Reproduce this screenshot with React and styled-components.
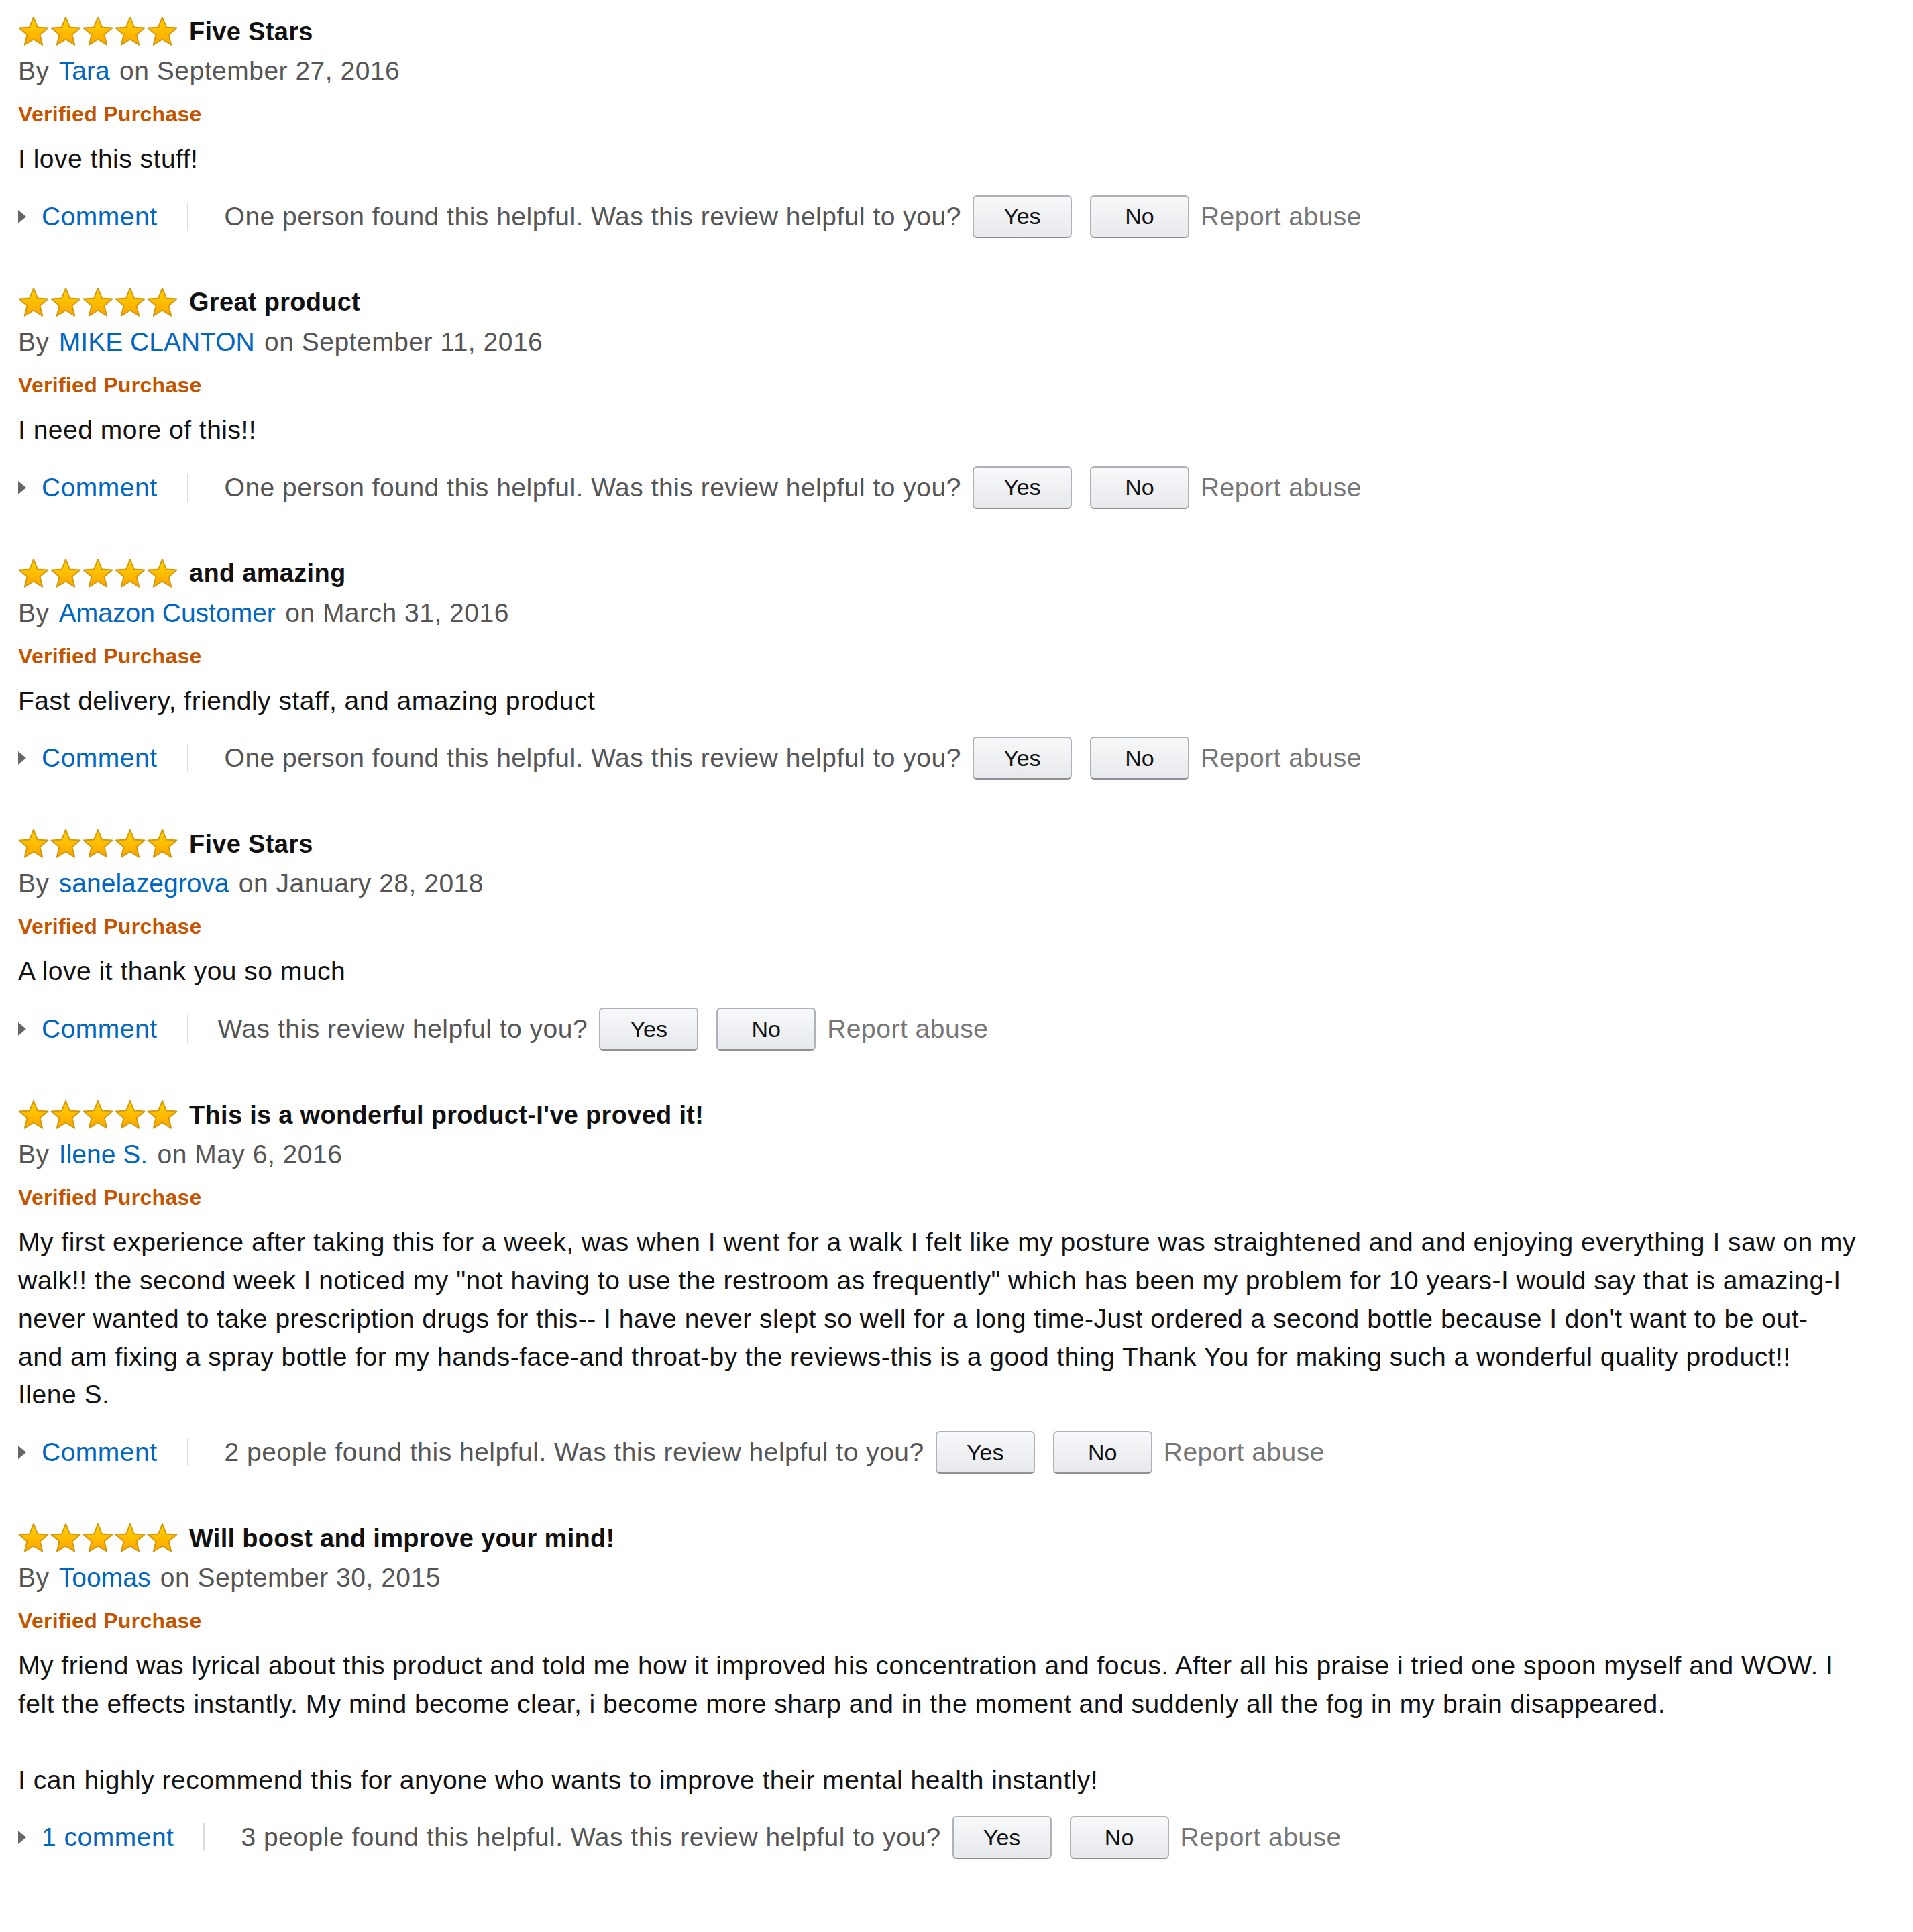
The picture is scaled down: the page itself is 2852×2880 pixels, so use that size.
import React from "react";
import styled, { createGlobalStyle, css } from "styled-components";

const GlobalStyle = createGlobalStyle`
  body {
    margin: 0;
    background: #ffffff;
    font-family: "Liberation Sans", Arial, sans-serif;
    color: #111111;
  }
`;

// Amazon Ember runs a bit wider than Arial, so open the spacing up a little
const baseText = css`
  font-size: 39px;
  letter-spacing: 0.5px;
`;

const ReviewList = styled.div`
  box-sizing: border-box;
  width: 2852px;
  min-height: 2880px;
  padding: 22px 0 0 27px;
`;

const ReviewBlock = styled.div`
  margin-bottom: 71px;
`;

const TitleRow = styled.div`
  display: flex;
  align-items: center;
  gap: 15px;
  height: 50px;
`;

const ReviewTitle = styled.span`
  font-size: 38px;
  font-weight: bold;
  letter-spacing: 0.3px;
  color: #111111;
`;

const ByLine = styled.div`
  ${baseText}
  line-height: 68px;
  color: #555555;
`;

const Author = styled.a`
  color: #0066c0;
  text-decoration: none;
  letter-spacing: 0;
  margin: 0 3px;
`;

const VerifiedBadge = styled.div`
  font-size: 32px;
  font-weight: bold;
  letter-spacing: 0.3px;
  line-height: 60px;
  color: #c45500;
`;

const ReviewText = styled.div`
  ${baseText}
  margin-top: 9px;
  line-height: 56.8px;
  color: #111111;
  white-space: pre-line;
`;

const ActionRow = styled.div`
  ${baseText}
  display: flex;
  align-items: center;
  height: 64px;
  margin-top: 25px;
`;

const Caret = styled.span`
  width: 0;
  height: 0;
  border-left: 12px solid #666666;
  border-top: 10px solid transparent;
  border-bottom: 10px solid transparent;
  margin-right: 23px;
`;

const CommentLink = styled.a`
  color: #0066c0;
  text-decoration: none;
`;

const Divider = styled.span`
  width: 2px;
  height: 42px;
  background: #dddddd;
  margin: 0 44px;
`;

const HelpfulText = styled.span`
  color: #555555;
`;

const Count = styled.span`
  padding-left: 10px;
`;

const VoteButton = styled.button`
  box-sizing: border-box;
  width: 148px;
  height: 64px;
  margin-left: ${(p) => (p.$second ? "27px" : "17px")};
  border: 2px solid #adb1b8;
  border-bottom-color: #8d9096;
  border-radius: 6px;
  background: linear-gradient(to bottom, #f7f8fa, #e7e9ec);
  font-family: inherit;
  font-size: 34px;
  color: #111111;
  cursor: pointer;
`;

const ReportLink = styled.a`
  margin-left: 17px;
  color: #767676;
  text-decoration: none;
`;

const STAR =
  "22,1 27.9,15.4 43.4,16.6 31.5,26.6 35.2,41.7 22,33.5 8.8,41.7 12.5,26.6 0.6,16.6 16.1,15.4";

const Stars = () => (
  <svg width="240" height="44" viewBox="0 0 240 44">
    <defs>
      <linearGradient id="starFill" x1="0" y1="0" x2="0" y2="1">
        <stop offset="0" stopColor="#ffd400" />
        <stop offset="1" stopColor="#ffa500" />
      </linearGradient>
    </defs>
    {[0, 1, 2, 3, 4].map((i) => (
      <polygon
        key={i}
        points={STAR}
        transform={`translate(${i * 48 + 1} 0)`}
        fill="url(#starFill)"
        stroke="#d39a0c"
        strokeWidth="2"
        strokeLinejoin="round"
      />
    ))}
  </svg>
);

const reviews = [
  {
    title: "Five Stars",
    author: "Tara",
    date: "September 27, 2016",
    text: "I love this stuff!",
    comment: "Comment",
    helpful: "One person found this helpful.",
  },
  {
    title: "Great product",
    author: "MIKE CLANTON",
    date: "September 11, 2016",
    text: "I need more of this!!",
    comment: "Comment",
    helpful: "One person found this helpful.",
  },
  {
    title: "and amazing",
    author: "Amazon Customer",
    date: "March 31, 2016",
    text: "Fast delivery, friendly staff, and amazing product",
    comment: "Comment",
    helpful: "One person found this helpful.",
  },
  {
    title: "Five Stars",
    author: "sanelazegrova",
    date: "January 28, 2018",
    text: "A love it thank you so much",
    comment: "Comment",
    helpful: null,
  },
  {
    title: "This is a wonderful product-I've proved it!",
    author: "Ilene S.",
    date: "May 6, 2016",
    text:
      "My first experience after taking this for a week, was when I went for a walk I felt like my posture was straightened and and enjoying everything I saw on my\n" +
      'walk!! the second week I noticed my "not having to use the restroom as frequently" which has been my problem for 10 years-I would say that is amazing-I\n' +
      "never wanted to take prescription drugs for this-- I have never slept so well for a long time-Just ordered a second bottle because I don't want to be out-\n" +
      "and am fixing a spray bottle for my hands-face-and throat-by the reviews-this is a good thing Thank You for making such a wonderful quality product!!\n" +
      "Ilene S.",
    comment: "Comment",
    helpful: "2 people found this helpful.",
  },
  {
    title: "Will boost and improve your mind!",
    author: "Toomas",
    date: "September 30, 2015",
    text:
      "My friend was lyrical about this product and told me how it improved his concentration and focus. After all his praise i tried one spoon myself and WOW. I\n" +
      "felt the effects instantly. My mind become clear, i become more sharp and in the moment and suddenly all the fog in my brain disappeared.\n" +
      "\n" +
      "I can highly recommend this for anyone who wants to improve their mental health instantly!",
    comment: "1 comment",
    helpful: "3 people found this helpful.",
  },
];

const Review = ({ review }) => (
  <ReviewBlock>
    <TitleRow>
      <Stars />
      <ReviewTitle>{review.title}</ReviewTitle>
    </TitleRow>
    <ByLine>
      By <Author href="#">{review.author}</Author> on {review.date}
    </ByLine>
    <VerifiedBadge>Verified Purchase</VerifiedBadge>
    <ReviewText>{review.text}</ReviewText>
    <ActionRow>
      <Caret />
      <CommentLink href="#">{review.comment}</CommentLink>
      <Divider />
      <HelpfulText>
        {review.helpful && <Count>{review.helpful} </Count>}
        Was this review helpful to you?
      </HelpfulText>
      <VoteButton>Yes</VoteButton>
      <VoteButton $second>No</VoteButton>
      <ReportLink href="#">Report abuse</ReportLink>
    </ActionRow>
  </ReviewBlock>
);

const App = () => (
  <>
    <GlobalStyle />
    <ReviewList>
      {reviews.map((review, i) => (
        <Review key={i} review={review} />
      ))}
    </ReviewList>
  </>
);

export default App;
